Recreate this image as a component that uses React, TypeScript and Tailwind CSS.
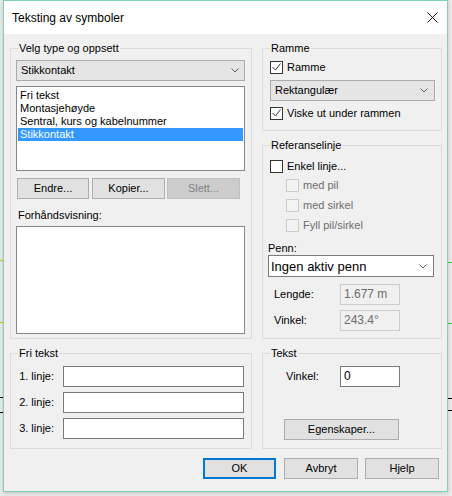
import type { ReactNode } from "react";

const font = { fontFamily: '"Liberation Sans", Arial, sans-serif' };

function Group({ title, className, children }: { title: string; className?: string; children: ReactNode }) {
  return (
    <div className={`relative border border-[#dcdcdc] ${className ?? ""}`}>
      <span className="absolute -top-[7px] left-[7px] bg-[#f0f0f0] px-[1px] leading-[13px] text-black">{title}</span>
      {children}
    </div>
  );
}

function Check({ checked, disabled }: { checked?: boolean; disabled?: boolean }) {
  return (
    <span
      className={`relative block h-[13px] w-[13px] shrink-0 border ${
        disabled ? "border-[#cccccc] bg-[#f3f3f3]" : "border-[#333333] bg-white"
      }`}
    >
      {checked && (
        <svg className="absolute left-0 top-0" width="11" height="11" viewBox="0 0 11 11">
          <path d="M1.5 5 L4.5 8 L9.5 1.5" stroke="#333333" strokeWidth="1" fill="none" />
        </svg>
      )}
    </span>
  );
}

function CheckRow({ label, checked, disabled, className }: { label: string; checked?: boolean; disabled?: boolean; className?: string }) {
  return (
    <div className={`flex h-[13px] items-center gap-[4px] ${className ?? ""}`}>
      <Check checked={checked} disabled={disabled} />
      <span className={disabled ? "text-[#6d6d6d]" : "text-black"}>{label}</span>
    </div>
  );
}

function Chevron() {
  return (
    <svg width="8" height="5" viewBox="0 0 8 5" className="shrink-0">
      <path d="M0.5 0.5 L4 4 L7.5 0.5" stroke="#606060" strokeWidth="1" fill="none" />
    </svg>
  );
}

function Btn({ children, className, disabled }: { children: ReactNode; className?: string; disabled?: boolean }) {
  return (
    <div
      className={`flex h-[21px] items-center justify-center border ${
        disabled ? "border-[#bfbfbf] bg-[#cccccc] text-[#838383]" : "border-[#adadad] bg-[#e1e1e1] text-black"
      } ${className ?? ""}`}
    >
      {children}
    </div>
  );
}

function Field({ value, disabled, className }: { value?: string; disabled?: boolean; className?: string }) {
  return (
    <div
      className={`flex h-[21px] items-center border pl-[3px] text-[12px] ${
        disabled ? "border-[#cccccc] bg-[#f0f0f0] text-[#6d6d6d]" : "border-[#7a7a7a] bg-white text-black"
      } ${className ?? ""}`}
    >
      {value}
    </div>
  );
}

export default function App() {
  return (
    <div className="relative h-[496px] w-[452px] overflow-hidden bg-[#ebebeb] text-[11px] leading-[13px]" style={font}>
      {/* bits of drawing behind the dialog */}
      <div className="absolute left-0 top-[260px] h-px w-[3px] bg-[#d6c800]" />
      <div className="absolute left-0 top-[322px] h-px w-[3px] bg-[#d6c800]" />
      <div className="absolute left-0 top-[397px] h-px w-[3px] bg-black" />
      <div className="absolute left-0 top-[412px] h-px w-[3px] bg-black" />
      <div className="absolute right-0 top-[262px] h-px w-[4px] bg-[#35d04a]" />
      <div className="absolute right-0 top-[323px] h-px w-[4px] bg-[#35d04a]" />
      <div className="absolute right-0 top-[398px] h-px w-[4px] bg-black" />
      <div className="absolute right-0 top-[410px] h-px w-[4px] bg-black" />

      <div className="relative ml-[3px] flex h-[492px] w-[445px] flex-col border border-[#7fd3b1] bg-[#f0f0f0] shadow-[0_1px_4px_rgba(0,0,0,0.18)]">
        <div className="flex h-[33px] items-center justify-between bg-white pl-[8px] pr-[9px] text-[12px] text-black">
          <span className="pt-[1px]">Teksting av symboler</span>
          <svg width="11" height="11" viewBox="0 0 11 11">
            <path d="M0.5 0.5 L10.5 10.5 M10.5 0.5 L0.5 10.5" stroke="#111" strokeWidth="1" />
          </svg>
        </div>

        <div className="flex flex-1 flex-col pl-[6px] pr-[5px] pt-[14px]">
          <div className="flex gap-[10px]">
            {/* left column */}
            <div className="flex w-[242px] flex-col gap-[14px]">
              <Group title="Velg type og oppsett" className="h-[291px] px-[5px] pt-[11px]">
                <div className="flex h-[21px] w-[229px] items-center justify-between border border-[#acacac] bg-[#e5e5e5] pl-[4px] pr-[5px]">
                  <span>Stikkontakt</span>
                  <Chevron />
                </div>
                <div className="mt-[5px] h-[85px] w-[229px] border border-[#828790] bg-white px-[1px] pt-[2px]">
                  <div className="h-[13px] pl-[2px]">Fri tekst</div>
                  <div className="h-[13px] pl-[2px]">Montasjehøyde</div>
                  <div className="h-[13px] pl-[2px]">Sentral, kurs og kabelnummer</div>
                  <div className="h-[13px] bg-[#3399ff] pl-[2px] text-white">Stikkontakt</div>
                </div>
                <div className="mt-[7px] flex">
                  <Btn className="ml-[1px] w-[72px]">Endre...</Btn>
                  <Btn className="ml-[3px] w-[73px]">Kopier...</Btn>
                  <Btn className="ml-[2px] w-[73px]" disabled>
                    Slett...
                  </Btn>
                </div>
                <div className="mt-[10px] h-[13px] pl-[2px]">Forhåndsvisning:</div>
                <div className="mt-[4px] h-[108px] w-[229px] border border-[#828790] bg-white" />
              </Group>

              <Group title="Fri tekst" className="flex h-[96px] flex-col gap-[5px] pt-[12px]">
                {["1. linje:", "2. linje:", "3. linje:"].map((l) => (
                  <div key={l} className="flex items-center">
                    <span className="w-[43px] text-right">{l}</span>
                    <Field className="ml-[9px] w-[181px]" />
                  </div>
                ))}
              </Group>
            </div>

            {/* right column */}
            <div className="flex w-[180px] flex-col gap-[14px]">
              <Group title="Ramme" className="h-[83px] pl-[7px] pt-[12px]">
                <CheckRow label="Ramme" checked />
                <div className="mt-[6px] flex h-[21px] w-[165px] items-center justify-between border border-[#acacac] bg-[#e5e5e5] pl-[4px] pr-[6px]">
                  <span>Rektangulær</span>
                  <Chevron />
                </div>
                <CheckRow label="Viske ut under rammen" checked className="mt-[6px]" />
              </Group>

              <Group title="Referanselinje" className="h-[194px] pl-[7px] pt-[14px]">
                <CheckRow label="Enkel linje..." />
                <CheckRow label="med pil" disabled className="ml-[16px] mt-[6px]" />
                <CheckRow label="med sirkel" disabled className="ml-[16px] mt-[7px]" />
                <CheckRow label="Fyll pil/sirkel" disabled className="ml-[16px] mt-[7px]" />
                <div className="-ml-[2px] mt-[10px] h-[13px]">Penn:</div>
                <div className="-ml-[2px] flex h-[22px] w-[166px] items-center justify-between border border-[#7a7a7a] bg-white pl-[2px] pr-[6px] text-[13px]">
                  <span>Ingen aktiv penn</span>
                  <Chevron />
                </div>
                <div className="mt-[7px] flex items-center">
                  <span className="ml-[4px] w-[66px]">Lengde:</span>
                  <Field value="1.677 m" disabled className="w-[60px]" />
                </div>
                <div className="mt-[5px] flex items-center">
                  <span className="ml-[4px] w-[66px]">Vinkel:</span>
                  <Field value="243.4°" disabled className="w-[60px]" />
                </div>
              </Group>

              <Group title="Tekst" className="h-[96px] pt-[12px]">
                <div className="flex items-center">
                  <span className="ml-[23px] w-[54px]">Vinkel:</span>
                  <Field value="0" className="w-[60px]" />
                </div>
                <Btn className="ml-[21px] mt-[32px] w-[115px]">Egenskaper...</Btn>
              </Group>
            </div>
          </div>

          <div className="mt-[9px] flex justify-end pr-[3px]">
            <div className="flex h-[21px] w-[73px] items-center justify-center border-2 border-[#0078d7] bg-[#e1e1e1]">OK</div>
            <Btn className="ml-[8px] w-[74px]">Avbryt</Btn>
            <Btn className="ml-[7px] w-[74px]">Hjelp</Btn>
          </div>
        </div>
      </div>
    </div>
  );
}
